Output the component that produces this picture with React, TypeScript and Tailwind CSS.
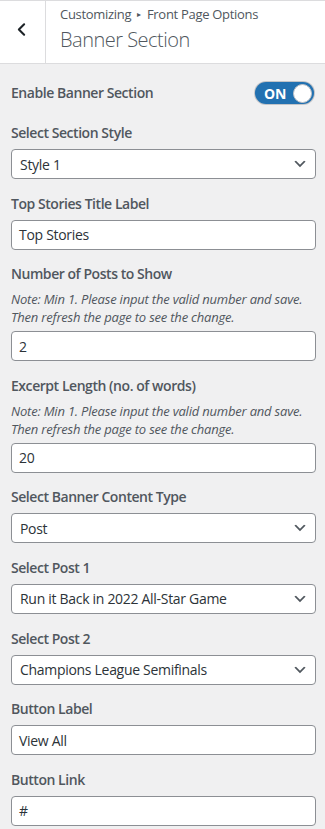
import { ChevronLeft } from "lucide-react";

const font = "font-['Open_Sans','Noto_Sans',sans-serif]";

const Chevron = () => (
  <svg width="16" height="16" viewBox="0 0 20 20" className="shrink-0">
    <path d="M5 6l5 5 5-5 2 1-7 7-7-7z" fill="#50575e" />
  </svg>
);

const Label = ({ children }: { children: React.ReactNode }) => (
  <div className="text-[14px] leading-[20px] font-semibold text-[#50575e] tracking-[-0.45px]">{children}</div>
);

const Note = () => (
  <div className="mt-[6px] text-[13px] leading-[18px] italic text-[#50575e] tracking-[-0.2px]">
    Note: Min 1. Please input the valid number and save. Then refresh the page to see the change.
  </div>
);

const TextBox = ({ value }: { value: string }) => (
  <div className="h-[30px] w-[305px] bg-white border border-[#8c8f94] rounded-[4px] flex items-center px-[7px] text-[14px] text-[#2c3338] tracking-[-0.3px]">
    {value}
  </div>
);

const SelectBox = ({ value }: { value: string }) => (
  <div className="h-[30px] w-[305px] bg-white border border-[#8c8f94] rounded-[4px] flex items-center justify-between pl-[8px] pr-[7px] text-[14px] text-[#2c3338] tracking-[-0.3px]">
    <span>{value}</span>
    <Chevron />
  </div>
);

const Field = ({ label, children, note }: { label: string; children: React.ReactNode; note?: boolean }) => (
  <div className="mb-[14.6px]">
    <Label>{label}</Label>
    {note && <Note />}
    <div className={note ? "mt-[5px]" : "mt-[6px]"}>{children}</div>
  </div>
);

export default function App() {
  return (
    <div className={`w-[325px] h-[829px] bg-[#f0f0f1] overflow-hidden ${font}`}>
      <div className="h-[64px] bg-white border-t border-b border-[#dcdcde] flex">
        <div className="w-[46px] border-r border-[#dcdcde] flex items-center justify-center pb-[6px] pr-[3px]">
          <ChevronLeft size={21} strokeWidth={2.4} color="#1d2327" />
        </div>
        <div className="pl-[14px] pt-[3px]">
          <div className="text-[13px] leading-[20px] text-[#50575e] flex items-center tracking-[-0.3px]">
            Customizing
            <span className="mx-[6px] text-[8px]">&#9656;</span>
            Front Page Options
          </div>
          <div className="text-[20px] leading-[28px] font-light text-[#50575e] mt-[2px] tracking-[-0.5px]">
            Banner Section
          </div>
        </div>
      </div>

      <div className="pl-[11px] pt-[17px]">
        <div className="flex items-center justify-between w-[303px] h-[24px] mb-[18px]">
          <Label>Enable Banner Section</Label>
          <div className="w-[59px] h-[22px] rounded-full bg-[#2271b1] ring-1 ring-[#c3c4c7] flex items-center justify-between pl-[9px] pr-[2px]">
            <span className="text-white text-[14px] font-bold tracking-[-0.2px]">ON</span>
            <span className="w-[19px] h-[19px] rounded-full bg-white border border-[#c3c4c7]" />
          </div>
        </div>

        <Field label="Select Section Style">
          <SelectBox value="Style 1" />
        </Field>
        <Field label="Top Stories Title Label">
          <TextBox value="Top Stories" />
        </Field>
        <Field label="Number of Posts to Show" note>
          <TextBox value="2" />
        </Field>
        <Field label="Excerpt Length (no. of words)" note>
          <TextBox value="20" />
        </Field>
        <Field label="Select Banner Content Type">
          <SelectBox value="Post" />
        </Field>
        <Field label="Select Post 1">
          <SelectBox value="Run it Back in 2022 All-Star Game" />
        </Field>
        <Field label="Select Post 2">
          <SelectBox value="Champions League Semifinals" />
        </Field>
        <Field label="Button Label">
          <TextBox value="View All" />
        </Field>
        <Field label="Button Link">
          <TextBox value="#" />
        </Field>
      </div>
    </div>
  );
}
